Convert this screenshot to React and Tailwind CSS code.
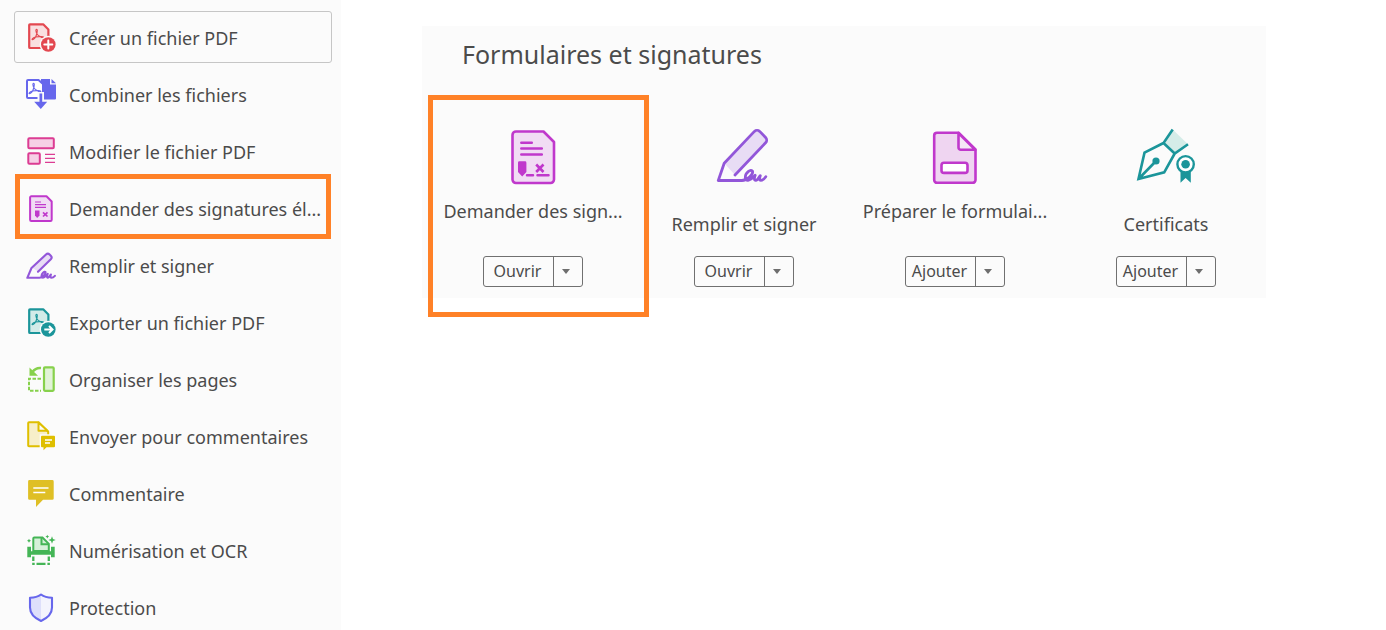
function AcrobatMark({ color, x = 7, y = 7 }) {
  return (
    <path
      d={`M${x} ${y + 11.5}c.3-1.600 2.400-2.200 3.600-2.500c1.200-2.400 1.800-4.400 1.700-6.500c0-1.500-1.600-1.500-1.400 .2c.3 2.600 2.300 5 4.300 5.900c2.200-.3 3.800 .4 3.600 1c-.6 .9-2.400 0-3.600-1c-1.500-.1-3 .1-4.600 .4c-1.200 2-3.400 3.500-3.600 2.500z`}
      stroke={color} strokeWidth="1.1" strokeLinejoin="round"
    />
  )
}

function Svg({ size = 32, children }) {
  return (
    <svg viewBox={`0 0 ${size} ${size}`} width={size} height={size} className="shrink-0" fill="none" aria-hidden="true">
      {children}
    </svg>
  )
}

function CreateIcon() {
  return (
    <Svg>
      <path d="M5 3.300h13.200l5.200 5.200V27H5a.8.8 0 0 1-.8-.8V4.100A.8.8 0 0 1 5 3.300z" fill="#f9dfe0" stroke="#e34850" strokeWidth="2.200" strokeLinejoin="round" />
      <AcrobatMark color="#e34850" x={7} y={7} />
      <circle cx="23.300" cy="23.500" r="8.700" fill="#fbfbfb" />
      <circle cx="23.300" cy="23.500" r="7.300" fill="#e34850" />
      <path d="M23.300 19.500v8M19.300 23.500h8" stroke="#fff" strokeWidth="2" strokeLinecap="round" />
    </Svg>
  )
}

function CombineIcon() {
  return (
    <Svg>
      <path d="M16 1h9v5.500h6V20.500a1 1 0 0 1-1 1H16z" fill="#6767ec" />
      <path d="M26.500 1v4.200H31z" fill="#6767ec" />
      <path d="M3 2h10.500l4.500 4v14H3a1 1 0 0 1-1-1V3a1 1 0 0 1 1-1z" fill="#fff" stroke="#6767ec" strokeWidth="2" />
      <AcrobatMark color="#6767ec" x={4} y={4} />
      <path d="M12.500 14h6.500v8h5.500L15.700 32 7 22h5.500z" fill="#fbfbfb" />
      <path d="M14.500 15.500h2.700v8.200h5L15.800 31 9.200 23.700h5.300z" fill="#6767ec" />
    </Svg>
  )
}

function EditIcon() {
  return (
    <Svg>
      <g fill="#f6d0e6" stroke="#dc3c93" strokeWidth="2">
        <rect x="3.300" y="3.300" width="25.500" height="10" rx="1" />
        <rect x="3.300" y="18.300" width="11.500" height="10.500" rx="1" />
      </g>
      <path d="M20 19.300h10M20 23.300h10M20 27.300h10" stroke="#dc3c93" strokeWidth="1.300" />
    </Svg>
  )
}

function SignRequestIcon() {
  return (
    <Svg>
      <path d="M6.300 4.300h15.200l5.200 5.200v18.300a1.200 1.200 0 0 1-1.200 1.200H6.300a1.200 1.200 0 0 1-1.200-1.200V5.500a1.200 1.200 0 0 1 1.200-1.200z" fill="#f1dcf4" stroke="#c038cc" strokeWidth="2" strokeLinejoin="round" />
      <path d="M10 10h6M10 12.700h11M10 15.300h11" stroke="#c038cc" strokeWidth="1.200" />
      <path d="M10 18.500h4.500v5L12.200 26 10 23.500z" fill="#c038cc" />
      <path d="M18 20.300l4.500 4.200M22.500 20.300L18 24.500" stroke="#c038cc" strokeWidth="1.700" />
    </Svg>
  )
}

function FillSignIcon() {
  return (
    <Svg>
      <path d="M7.500 19L21 5.500a2.600 2.600 0 0 1 3.600 0l1.200 1.200a2.600 2.600 0 0 1 0 3.600L13.500 22.800z" fill="#e8dcf5" />
      <path d="M13 22.800L25.800 10.300a2.600 2.600 0 0 0 0-3.600l-1.200-1.200a2.600 2.600 0 0 0-3.600 0L6.500 19 2.300 28.800H14.500c2.500 0 6.500-3.500 6-5.700c-.8-1.500-4.500 1.500-3.800 4.300c.5 2.800 3.500 .5 6-2.600c-.8 1.800-1 4 .2 3.800c1.300-.2 2.200-2.400 3-3.100c-.6 1.700-.7 3.300 .4 3.300c1.200 0 2.600-.8 3.600-2" stroke="#9256d9" strokeWidth="2.100" strokeLinecap="round" strokeLinejoin="round" />
    </Svg>
  )
}

function ExportIcon() {
  return (
    <Svg>
      <path d="M5 3.300h13.200l5.200 5.200V27H5a.8.8 0 0 1-.8-.8V4.100A.8.8 0 0 1 5 3.300z" fill="#d2ebe8" stroke="#1b959a" strokeWidth="2.200" strokeLinejoin="round" />
      <AcrobatMark color="#1b959a" x={7} y={7} />
      <circle cx="23.300" cy="23.500" r="8.700" fill="#fbfbfb" />
      <circle cx="23.300" cy="23.500" r="7.300" fill="#1b959a" />
      <path d="M19.300 23.500h7M24 20l3.500 3.500L24 27" stroke="#fff" strokeWidth="2" />
    </Svg>
  )
}

function OrganizeIcon() {
  return (
    <Svg>
      <rect x="19" y="4.300" width="9.700" height="23.500" rx="1" fill="#e2f3d8" stroke="#87d14c" strokeWidth="2.200" />
      <path d="M16 15.700H4v12h12" stroke="#87d14c" strokeWidth="2" strokeDasharray="3.500 1.500" />
      <path d="M16 5c-4-.4-6.500 1-8.500 4" stroke="#87d14c" strokeWidth="2.500" />
      <path d="M4.500 4.500v8.300h8.500z" fill="#87d14c" />
    </Svg>
  )
}

function SendCommentsIcon() {
  return (
    <Svg>
      <path d="M4 2.200h9.500l9.700 9.500v14.500H4a.8.8 0 0 1-.8-.8V3a.8.8 0 0 1 .8-.8z" fill="#f7efc9" stroke="#dfbf00" strokeWidth="2" strokeLinejoin="round" />
      <path d="M13.500 2.500v8.200h9z" fill="#fbfbfb" stroke="#dfbf00" strokeWidth="2" strokeLinejoin="round" />
      <path d="M14.700 14.300h17v14.200h-9.500L18 32.500v-4h-3.300z" fill="#fbfbfb" />
      <path d="M17 15.700h12a1 1 0 0 1 1 1v9.500a1 1 0 0 1-1 1h-7.500l-3 3v-3H17a1 1 0 0 1-1-1v-9.500a1 1 0 0 1 1-1z" fill="#dfbf00" />
      <path d="M20 20h7M20 23h5" stroke="#fff" strokeWidth="1.300" />
    </Svg>
  )
}

function CommentIcon() {
  return (
    <Svg>
      <path d="M4.500 3h22.800a1.400 1.400 0 0 1 1.400 1.400v17a1.400 1.400 0 0 1-1.400 1.400H18L11 30v-7.200H4.500a1.400 1.400 0 0 1-1.400-1.400v-17A1.400 1.400 0 0 1 4.500 3z" fill="#dfbf25" />
      <path d="M8.300 11h15.200M8.300 15.500h12" stroke="#fff" strokeWidth="1.700" />
    </Svg>
  )
}

function ScanIcon() {
  return (
    <Svg>
      <path d="M8.300 17V4.500a1 1 0 0 1 1-1h8.200l6.300 6.300V17z" fill="#d6f0d9" stroke="#44b556" strokeWidth="2" />
      <path d="M16.500 3.500v6.800h7" stroke="#44b556" strokeWidth="2" />
      <path d="M2.300 12.800H6v4.400h20v-4.400h3.700v10.400H26v-2.500H6v2.500H2.300z" fill="#44b556" />
      <path d="M8.300 22.500v4.500M23.800 22.500v4.500M7.200 29.800h2.500M11.500 29.800h9M22.400 29.800h2.500" stroke="#44b556" strokeWidth="2.300" />
      <path d="M27 2.300l1 2.700 2.700 1-2.700 1-1 2.700-1-2.700-2.700-1 2.700-1zM22.300 .7l.6 1.300 1.300.6-1.300.6-.6 1.300-.6-1.300-1.300-.6 1.300-.6zM4 4.800l.7 1.300 1.300.7-1.300.7L4 8.800l-.7-1.300L2 6.800l1.300-.7z" fill="#44b556" />
    </Svg>
  )
}

function ShieldIcon() {
  return (
    <Svg>
      <path d="M16 3.500c3 2.300 6.800 3.200 11 3.200v9.800c0 6.500-4.500 10.500-11 13.500C9.500 27 5 23 5 16.500V6.700c4.200 0 8-.9 11-3.200z" fill="#f4f4fd" />
      <path d="M16 3.500v26.500C9.500 27 5 23 5 16.500V6.700c4.200 0 8-.9 11-3.200z" fill="#dedffb" />
      <path d="M16 3.500c3 2.300 6.800 3.200 11 3.200v9.800c0 6.500-4.500 10.500-11 13.500C9.500 27 5 23 5 16.500V6.700c4.200 0 8-.9 11-3.200z" stroke="#6767ec" strokeWidth="2.100" strokeLinejoin="round" />
    </Svg>
  )
}

function SignRequestLarge() {
  return (
    <Svg size={64}>
      <path d="M15 5.500h27.500L53 16v37.500a3.500 3.500 0 0 1-3.500 3.500H15a3.500 3.500 0 0 1-3.500-3.500V9A3.500 3.500 0 0 1 15 5.500z" fill="#f1dcf4" stroke="#c038cc" strokeWidth="2.600" strokeLinejoin="round" />
      <path d="M20.300 16.700h10.500M20.300 22.500h20.500M20.300 28.500h20.500M26 49.300h6M36.500 49.300h11" stroke="#c038cc" strokeWidth="2.500" strokeLinecap="round" />
      <path d="M18.500 35.300h5.500a1.400 1.400 0 0 1 1.400 1.400v9.300L21.200 50.500 17 46v-9.300a1.400 1.400 0 0 1 1.500-1.400z" fill="#c038cc" />
      <path d="M35.200 38.500l7.300 7.500M42.500 38.500L35.200 46" stroke="#c038cc" strokeWidth="2.600" />
    </Svg>
  )
}

function FillSignLarge() {
  return (
    <Svg size={64}>
      <path d="M12.500 37.500L42.800 5.500a3.500 3.500 0 0 1 5 0l6 6a3.500 3.500 0 0 1 0 5L23 49z" fill="#e8dcf5" />
      <path d="M23 49L53.600 16.800a3.800 3.800 0 0 0 0-5.300l-5.900-6.100a3.800 3.800 0 0 0-5.300 0L12.200 37.300 6.300 54.500H30c5 0 11.500-6 10.500-9.300c-1.300-2.600-7 1.300-7.200 6c0 5.500 5.500 3.200 9.900-2c-1 2.500-1.300 5.600 .8 5.200c2-.4 2.800-3.500 4.300-4.700c-1 2.500-1.200 4.700 .5 4.700c2 0 3.500-1.500 5-3.700" stroke="#9256d9" strokeWidth="2.800" strokeLinecap="round" strokeLinejoin="round" />
    </Svg>
  )
}

function PrepareFormLarge() {
  return (
    <Svg size={64}>
      <path d="M14 6.800h21.500L52.500 23.500V54a2.800 2.800 0 0 1-2.800 2.800H14a2.800 2.800 0 0 1-2.800-2.800V9.600A2.800 2.800 0 0 1 14 6.800z" fill="#efd5f1" stroke="#c038cc" strokeWidth="2.600" strokeLinejoin="round" />
      <path d="M35.500 7v14.500a2.300 2.300 0 0 0 2.300 2.300h14.500z" fill="#f5e7f6" stroke="#c038cc" strokeWidth="2.600" strokeLinejoin="round" />
      <rect x="18.500" y="36.700" width="26" height="10.200" rx="2.500" fill="#fff" stroke="#c038cc" strokeWidth="2.600" />
    </Svg>
  )
}

function CertificateLarge() {
  return (
    <Svg size={64}>
      <path d="M38.700 3.500L54 18.300 40.500 27.300 29.500 17z" fill="#d5ece8" />
      <path d="M38.700 3.500L29.500 17l11.200 10.500L54 18.300M29.500 17L10.500 26.700 4.500 53l25.700-6.700L40.700 27.500M4.500 53L22 35" stroke="#1b959a" strokeWidth="2.600" />
      <circle cx="22" cy="35" r="3.600" fill="#1b959a" />
      <path d="M46.500 44h10.300v12.800L51.600 52l-5.100 4.800z" fill="#1b959a" />
      <circle cx="51.600" cy="38.300" r="8.200" fill="#fff" stroke="#1b959a" strokeWidth="2.400" />
      <circle cx="51.600" cy="38.300" r="4.300" fill="#1b959a" />
    </Svg>
  )
}

const tools = [
  { label: 'Créer un fichier PDF', icon: <CreateIcon />, active: true },
  { label: 'Combiner les fichiers', icon: <CombineIcon /> },
  { label: 'Modifier le fichier PDF', icon: <EditIcon /> },
  { label: 'Demander des signatures él...', icon: <SignRequestIcon />, marked: true },
  { label: 'Remplir et signer', icon: <FillSignIcon /> },
  { label: 'Exporter un fichier PDF', icon: <ExportIcon /> },
  { label: 'Organiser les pages', icon: <OrganizeIcon /> },
  { label: 'Envoyer pour commentaires', icon: <SendCommentsIcon /> },
  { label: 'Commentaire', icon: <CommentIcon /> },
  { label: 'Numérisation et OCR', icon: <ScanIcon /> },
  { label: 'Protection', icon: <ShieldIcon /> },
]

const cards = [
  { label: 'Demander des sign...', action: 'Ouvrir', icon: <SignRequestLarge />, long: true, marked: true },
  { label: 'Remplir et signer', action: 'Ouvrir', icon: <FillSignLarge /> },
  { label: 'Préparer le formulai...', action: 'Ajouter', icon: <PrepareFormLarge />, long: true },
  { label: 'Certificats', action: 'Ajouter', icon: <CertificateLarge /> },
]

function ToolRow({ tool }) {
  return (
    <li className="relative">
      <button type="button" className={`flex h-[52px] w-full items-center gap-3 rounded-[3px] border pl-2.5 text-left text-lg whitespace-nowrap ${tool.active ? 'border-[#c6c6c6]' : 'border-transparent'}`}>
        {tool.icon}
        <span className="pt-px">{tool.label}</span>
      </button>
      {tool.marked && <div className="pointer-events-none absolute inset-x-px -top-2 -bottom-[5px] border-5 border-[#ff8127]" />}
    </li>
  )
}

function ToolCard({ card }) {
  return (
    <div className="relative flex flex-col items-center">
      {card.icon}
      <div className={`mt-2 flex h-13 text-lg leading-[26px] whitespace-nowrap ${card.long ? 'items-start' : 'items-center'}`}>
        <span>{card.label}</span>
      </div>
      <div className="mt-1.5 flex h-[31px] w-[100px] rounded-[3px] border border-[#707070] text-base">
        <button type="button" className="flex flex-1 items-center justify-center border-r border-[#707070] pr-0.5 pb-0.5">{card.action}</button>
        <button type="button" aria-label={`Options : ${card.label}`} className="flex w-7 items-center justify-center pr-1">
          <svg viewBox="0 0 8 5" width="8" height="5" aria-hidden="true"><path d="M0 0h8L4 5z" fill="#6e6e6e" /></svg>
        </button>
      </div>
      {card.marked && <div className="pointer-events-none absolute -top-[31px] -right-6 -bottom-[30px] -left-[13px] border-5 border-[#ff8127]" />}
    </div>
  )
}

export default function App() {
  return (
    <div className="flex h-screen overflow-hidden bg-white font-['Noto_Sans','Open_Sans',sans-serif] text-[#4b4b4b]">
      <nav className="w-[341px] shrink-0 bg-[#fbfbfb] pt-[11px] pr-[9px] pl-[14px]">
        <ul className="space-y-[5px]">
          {tools.map(t => <ToolRow key={t.label} tool={t} />)}
        </ul>
      </nav>
      <main className="flex-1 pt-[26px] pr-[120px] pl-[81px]">
        <section className="bg-[#fbfbfb] pb-[11px]">
          <h1 className="pt-2.5 pl-10 text-[25px] leading-9">Formulaires et signatures</h1>
          <div className="mt-[54px] grid grid-cols-4 gap-[27px] pr-2 pl-[19px]">
            {cards.map(c => <ToolCard key={c.label} card={c} />)}
          </div>
        </section>
      </main>
    </div>
  )
}
